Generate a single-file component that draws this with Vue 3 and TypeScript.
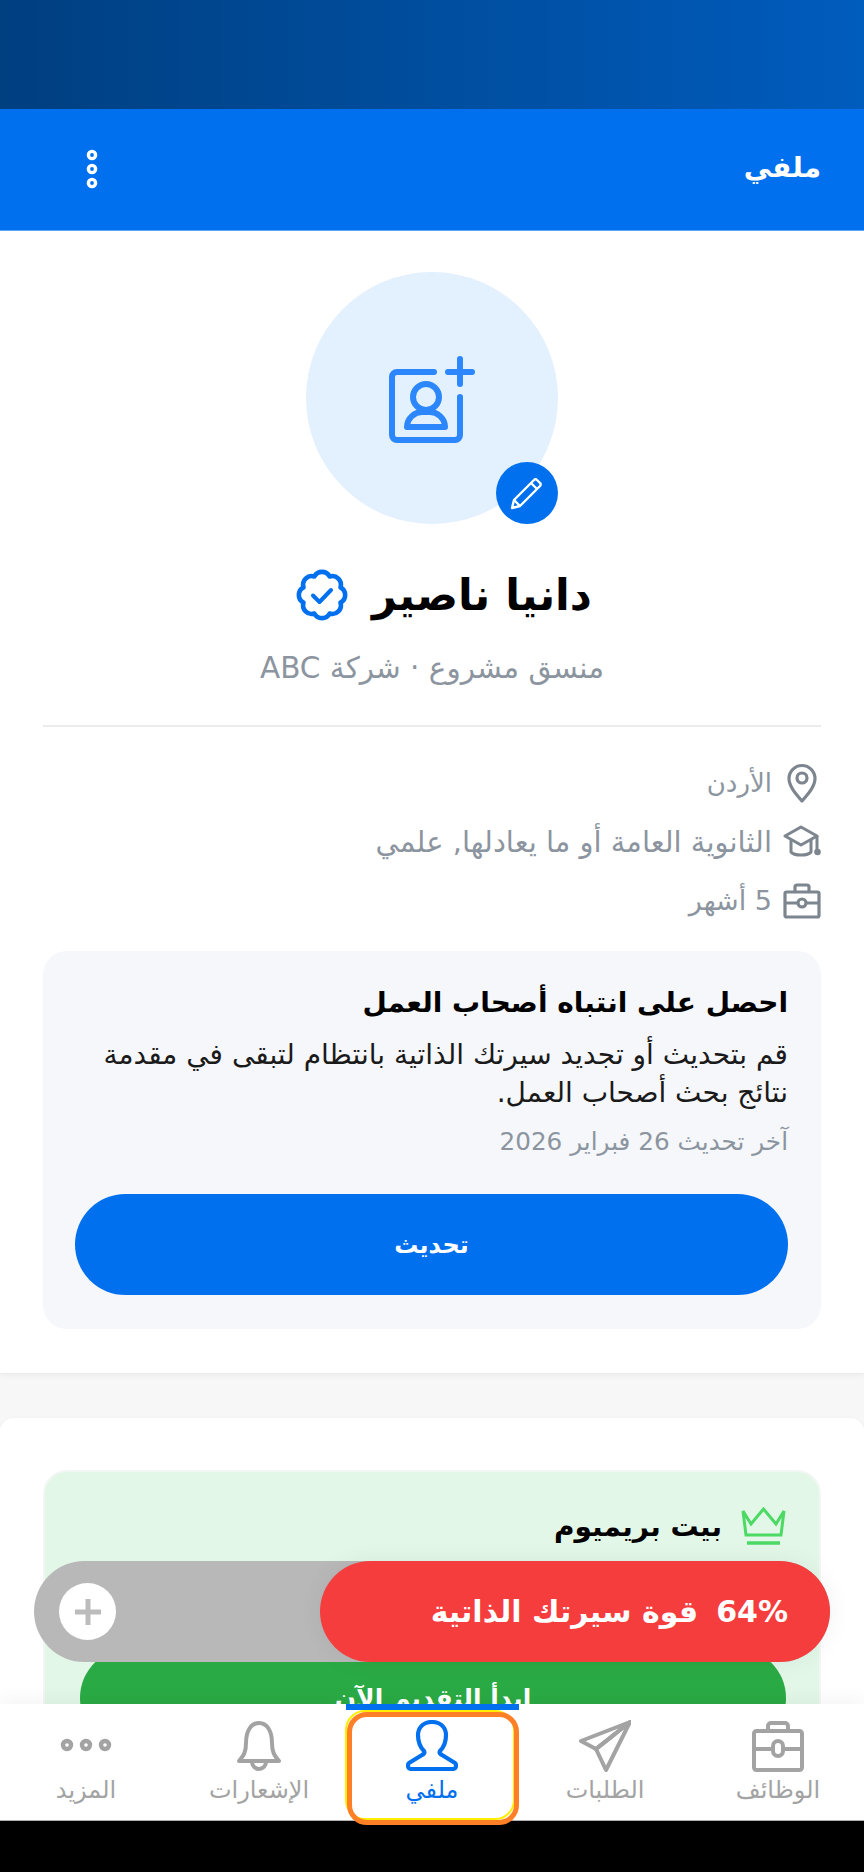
<!-- صفحة الملف الشخصي -->
<template>
  <div class="screen" dir="rtl">
    <div class="status-bar"></div>
    <header class="top-bar">
      <span class="top-title">ملفي</span>
      <svg class="more" width="12" height="44" viewBox="0 0 12 44" fill="none" stroke="#fff" stroke-width="3.4">
        <circle cx="6" cy="8" r="3.6" />
        <circle cx="6" cy="22" r="3.6" />
        <circle cx="6" cy="36" r="3.6" />
      </svg>
    </header>

    <main class="content">
      <section class="profile">
        <div class="avatar">
          <svg width="88" height="88" viewBox="0 0 88 88" fill="none" stroke="#2b87fb" stroke-width="6" stroke-linecap="round" stroke-linejoin="round">
            <path d="M46 16H9a5 5 0 0 0-5 5V79a5 5 0 0 0 5 5H67a5 5 0 0 0 5-5V41" />
            <path d="M72 3V28M60 16H84" />
            <circle cx="38" cy="41" r="13" />
            <path d="M19 71c0-9 8-15 15-15h8c7 0 15 6 15 15z" />
          </svg>
          <div class="edit-badge">
            <svg width="36" height="36" viewBox="0 0 36 36" fill="none" stroke="#fff" stroke-width="2.4" stroke-linejoin="round">
              <path d="M3 33l2-8L25 5a2 2 0 0 1 3 0l3 3a2 2 0 0 1 0 3L11 31z" />
              <path d="M22 8l6 6M5 25l6 6" />
            </svg>
          </div>
        </div>

        <div class="name-row">
          <h1 class="name">دانيا ناصير</h1>
          <svg width="52" height="52" viewBox="0 0 52 52" fill="none" stroke="#0070ef" stroke-linecap="round" stroke-linejoin="round">
            <path :d="scallopPath" stroke-width="4.6" />
            <path d="M17 26.5l6.5 6.5L35 21" stroke-width="4" />
          </svg>
        </div>
        <p class="role">منسق مشروع · شركة ABC</p>
        <div class="divider"></div>

        <ul class="facts">
          <li class="fact fact-short">
            <span class="fact-icon">
              <svg width="38" height="40" viewBox="0 0 38 40" fill="none" stroke="#7d868f" stroke-width="3.2" stroke-linejoin="round">
                <path d="M19 38C12 30 6 23 6 15.500a13 13 0 0 1 26 0C32 23 26 30 19 38z" />
                <circle cx="19" cy="15" r="5" />
              </svg>
            </span>
            <span>الأردن</span>
          </li>
          <li class="fact fact-wide">
            <span class="fact-icon">
              <svg width="38" height="34" viewBox="0 0 38 34" fill="none" stroke="#7d868f" stroke-width="3" stroke-linejoin="round">
                <path d="M18 2L2 11l16 9 16-9z" />
                <path d="M8 15v12c3 4 17 4 20 0V15" />
                <path d="M34 11v14" />
                <circle cx="34.500" cy="27" r="1.800" fill="#7d868f" />
              </svg>
            </span>
            <span>الثانوية العامة أو ما يعادلها, علمي</span>
          </li>
          <li class="fact">
            <span class="fact-icon">
              <svg width="38" height="36" viewBox="0 0 38 36" fill="none" stroke="#7d868f" stroke-width="3.2" stroke-linejoin="round">
                <rect x="2" y="9" width="34" height="25" rx="1.500" />
                <path d="M12 9V4a2 2 0 0 1 2-2h10a2 2 0 0 1 2 2v5" />
                <path d="M2 20h12M24 20h12" />
                <rect x="15" y="16" width="8" height="8" rx="4" />
              </svg>
            </span>
            <span>5 أشهر</span>
          </li>
        </ul>

        <div class="update-card">
          <h2 class="update-title">احصل على انتباه أصحاب العمل</h2>
          <p class="update-text">قم بتحديث أو تجديد سيرتك الذاتية بانتظام لتبقى في مقدمة نتائج بحث أصحاب العمل.</p>
          <p class="update-date">آخر تحديث 26 فبراير 2026</p>
          <button class="update-btn">تحديث</button>
        </div>
      </section>

      <section class="premium-wrap">
        <div class="premium">
          <div class="premium-head">
            <svg width="45" height="38" viewBox="0 0 45 38" fill="none" stroke="#4cd964" stroke-width="3" stroke-linejoin="miter">
              <path d="M2 4l8 13L22.500 2 35 17l8-13-3 24H5z" />
              <path d="M6 36h33" stroke-width="3.600" />
            </svg>
            <span class="premium-title">بيت بريميوم</span>
          </div>
          <button class="premium-btn">ابدأ التقديم الآن</button>
        </div>
      </section>
    </main>

    <div class="strength">
      <div class="strength-red">
        <span class="strength-num">64%</span>
        <span>قوة سيرتك الذاتية</span>
      </div>
      <div class="strength-plus">
        <svg width="30" height="30" viewBox="0 0 30 30" fill="none" stroke="#bcbcbc" stroke-width="5">
          <path d="M15 2V28M2 15H28" />
        </svg>
      </div>
    </div>

    <nav class="nav">
      <div class="nav-item">
        <svg width="52" height="52" viewBox="0 0 52 52" fill="none" stroke="#a3a3a3" stroke-width="4" stroke-linejoin="round">
          <rect x="2" y="11" width="48" height="39" rx="2.500" />
          <path d="M16 11V6a3 3 0 0 1 3-3h14a3 3 0 0 1 3 3v5" />
          <path d="M2 29h19M31 29h19" />
          <rect x="21" y="21" width="10" height="15" rx="5" />
        </svg>
        <span>الوظائف</span>
      </div>
      <div class="nav-item">
        <svg width="52" height="52" viewBox="0 0 52 52" fill="none" stroke="#a3a3a3" stroke-width="4" stroke-linejoin="round" stroke-linecap="round">
          <path d="M51 2L2 21l15 8z" />
          <path d="M51 2L27 50 17 29z" />
          <path d="M17 29L36 14" />
        </svg>
        <span>الطلبات</span>
      </div>
      <div class="nav-item active">
        <svg width="52" height="52" viewBox="0 0 52 52" fill="none" stroke="#0070ef" stroke-width="4.200" stroke-linejoin="round">
          <path d="M26 2c-9 0-14 6-14 13 0 7 2 12 6 16 1 2 0 3-2 4L3 43c-2 2-1 6 2 6h42c3 0 4-4 2-6l-13-8c-2-1-3-2-2-4 4-4 6-9 6-16 0-7-5-13-14-13z" />
        </svg>
        <span>ملفي</span>
        <i class="focus-ring"></i>
      </div>
      <div class="nav-item">
        <svg width="52" height="52" viewBox="0 0 52 52" fill="none" stroke="#a3a3a3" stroke-width="4" stroke-linejoin="round" stroke-linecap="round">
          <path d="M6 41c5-6 7-9 7-18C13 11 18 3 26 3s13 8 13 20c0 9 2 12 7 18z" />
          <path d="M19 42a7 7 0 0 0 14 0" />
        </svg>
        <span>الإشعارات</span>
      </div>
      <div class="nav-item">
        <svg width="52" height="52" viewBox="0 0 52 52" fill="none" stroke="#a3a3a3" stroke-width="4.400">
          <circle cx="7" cy="25" r="4" />
          <circle cx="26" cy="25" r="4" />
          <circle cx="45" cy="25" r="4" />
        </svg>
        <span>المزيد</span>
      </div>
    </nav>
    <div class="black-bar"></div>
  </div>
</template>

<script setup lang="ts">
// شكل الشارة: ثمانية فصوص حول المركز
const scallopPoints = Array.from({ length: 8 }, (_, i) => {
  const angle = ((i * 45 + 22.5) * Math.PI) / 180
  return [26 + 20 * Math.cos(angle), 26 + 20 * Math.sin(angle)]
})

const scallopPath =
  scallopPoints
    .map(([x, y], i) => (i === 0 ? `M${x.toFixed(2)} ${y.toFixed(2)}` : `A8.600 8.600 0 0 1 ${x.toFixed(2)} ${y.toFixed(2)}`))
    .join(' ') +
  ` A8.600 8.600 0 0 1 ${scallopPoints[0][0].toFixed(2)} ${scallopPoints[0][1].toFixed(2)}z`
</script>

<style>
html,
body {
  margin: 0;
  background: #000;
}
</style>

<style scoped>
.screen {
  position: relative;
  width: 864px;
  height: 1872px;
  display: flex;
  flex-direction: column;
  overflow: hidden;
  background: #f7f7f7;
  font-family: "DejaVu Sans", "Noto Sans", sans-serif;
}

.status-bar {
  height: 109px;
  flex: none;
  background: linear-gradient(90deg, #003f80, #005cbd);
}

.top-bar {
  height: 122px;
  flex: none;
  display: flex;
  align-items: center;
  justify-content: space-between;
  padding: 0 43px 0 86px;
  background: #0070ef;
  border-bottom: 1px solid #5ca5f7;
  box-sizing: border-box;
  color: #fff;
}

.top-title {
  font-size: 28px;
  font-weight: 700;
  line-height: 40px;
  margin-top: -4px;
}

.more {
  display: block;
  margin-top: -2px;
}

.content {
  flex: 1;
  min-height: 0;
  overflow: hidden;
}

.profile {
  display: flex;
  flex-direction: column;
  align-items: center;
  height: 1142px;
  box-sizing: border-box;
  padding: 41px 43px 0;
  background: #fff;
  box-shadow: 0 2px 6px rgba(0, 0, 0, 0.06);
}

.avatar {
  position: relative;
  width: 252px;
  height: 252px;
  flex: none;
  display: flex;
  align-items: center;
  justify-content: center;
  border-radius: 50%;
  background: #e3f0fe;
}

.avatar > svg {
  margin-top: 3px;
}

.edit-badge {
  position: absolute;
  left: 190px;
  top: 190px;
  width: 62px;
  height: 62px;
  display: flex;
  align-items: center;
  justify-content: center;
  border-radius: 50%;
  background: #0070ef;
}

.name-row {
  display: flex;
  align-items: center;
  gap: 24px;
  margin: 40px 0 0 24px;
  height: 62px;
}

.name {
  margin: 0;
  font-size: 43px;
  font-weight: 700;
  color: #000;
}

.role {
  margin: 22px 0 0;
  font-size: 29.5px;
  line-height: 40px;
  color: #8c959f;
}

.divider {
  width: 100%;
  height: 2px;
  flex: none;
  margin-top: 37px;
  background: #ececec;
}

.facts {
  width: 100%;
  margin: 26px 0 0;
  padding: 0;
  list-style: none;
}

.fact {
  height: 59px;
  display: flex;
  align-items: center;
  gap: 11px;
  font-size: 27px;
  color: #8c959f;
}

.fact-short {
  font-size: 26px;
}

.fact-wide {
  font-size: 29px;
}

.fact-icon {
  width: 38px;
  flex: none;
  display: flex;
  justify-content: center;
}

.fact-icon svg {
  display: block;
}

.update-card {
  width: 100%;
  height: 378px;
  flex: none;
  margin-top: 21px;
  padding: 30px 33px 0;
  box-sizing: border-box;
  border-radius: 24px;
  background: #f5f7fa;
}

.update-title {
  margin: 0;
  font-size: 28px;
  line-height: 44px;
  font-weight: 700;
  color: #000;
}

.update-text {
  margin: 11px 0 0;
  font-size: 28px;
  line-height: 38px;
  color: #1a1a1a;
}

.update-date {
  margin: 10px 0 0;
  font-size: 24.700px;
  line-height: 40px;
  color: #8c959f;
}

.update-btn {
  display: block;
  width: 713px;
  height: 101px;
  margin: 32px 0 0;
  border: 0;
  border-radius: 51px;
  background: #0070ef;
  color: #fff;
  font: 700 24px "DejaVu Sans", sans-serif;
}

.premium-wrap {
  height: 400px;
  margin-top: 45px;
  padding: 52px 43px 0;
  box-sizing: border-box;
  border-radius: 14px 14px 0 0;
  background: #fff;
  box-shadow: 0 0 4px rgba(0, 0, 0, 0.03);
}

.premium {
  height: 340px;
  padding: 35px 33px 0;
  box-sizing: border-box;
  border: 2px solid #f3f7f4;
  border-radius: 24px;
  background: #e3f7e8;
}

.premium-head {
  display: flex;
  align-items: center;
  gap: 19px;
}

.premium-title {
  font-size: 28px;
  font-weight: 700;
  color: #000;
}

.premium-btn {
  display: block;
  width: 706px;
  height: 100px;
  margin: 103px 0 0;
  border: 0;
  border-radius: 50px;
  background: #2aaa44;
  color: #fff;
  font: 700 25px "DejaVu Sans", sans-serif;
}

.strength {
  position: absolute;
  left: 34px;
  top: 1561px;
  width: 796px;
  height: 101px;
  display: flex;
  justify-content: space-between;
  align-items: center;
  padding-left: 25px;
  box-sizing: border-box;
  border-radius: 51px;
  background: #b8b8b8;
  z-index: 1;
}

.strength-red {
  width: 510px;
  height: 101px;
  display: flex;
  align-items: center;
  gap: 18px;
  padding-right: 42px;
  box-sizing: border-box;
  border-radius: 51px;
  background: #f53d3d;
  box-shadow: 0 0 24px rgba(0, 0, 0, 0.06);
  color: #fff;
  font-size: 30px;
  font-weight: 700;
}

.strength-num {
  font-size: 30px;
}

.strength-plus {
  width: 57px;
  height: 57px;
  display: flex;
  align-items: center;
  justify-content: center;
  border-radius: 50%;
  background: #fff;
}

.nav {
  position: relative;
  z-index: 2;
  height: 117px;
  flex: none;
  display: grid;
  grid-template-columns: repeat(5, 173px);
  justify-content: center;
  box-sizing: border-box;
  background: #fff;
  border-bottom: 1px solid #b0b0b0;
  box-shadow: 0 -6px 16px rgba(0, 0, 0, 0.04);
}

.nav-item {
  position: relative;
  display: flex;
  flex-direction: column;
  align-items: center;
  padding-top: 16px;
  font-size: 24px;
  color: #a3a3a3;
}

.nav-item svg {
  display: block;
  flex: none;
}

.nav-item span {
  line-height: 34px;
  margin-top: 1px;
}

.nav-item.active {
  color: #0070ef;
}

.nav-item.active::before {
  content: "";
  position: absolute;
  left: 0;
  right: 0;
  top: 0;
  height: 6px;
  background: #0070ef;
}

.focus-ring {
  position: absolute;
  left: 1px;
  right: 0;
  top: 8px;
  height: 113px;
  box-sizing: border-box;
  border: 5px solid #ff7f27;
  border-radius: 20px;
}

.focus-ring::before {
  content: "";
  position: absolute;
  inset: -7px -1px 0 -7px;
  border: 2px solid #ffee00;
  border-radius: 20px;
  z-index: -1;
}

.black-bar {
  height: 51px;
  flex: none;
  background: #000;
}
</style>
